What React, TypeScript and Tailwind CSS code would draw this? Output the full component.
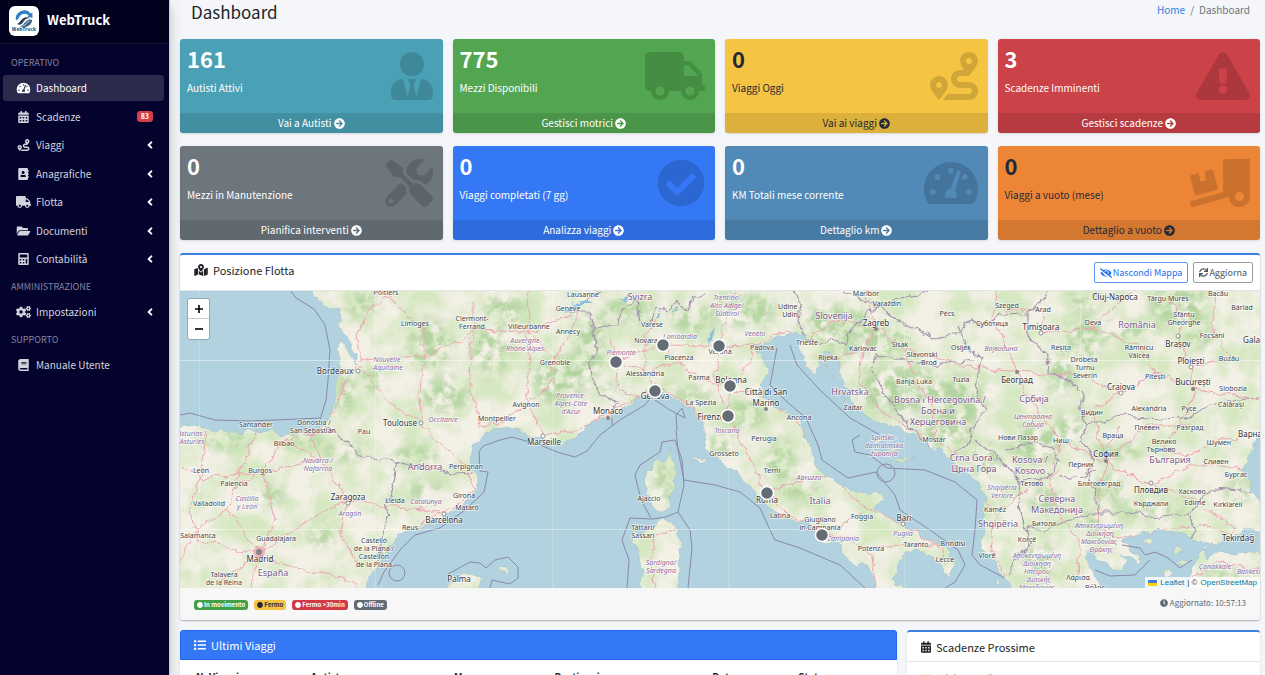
import React, { useState } from 'react';
import type { IconType } from 'react-icons';
import {
  FaAddressBook,
  FaAngleLeft,
  FaArrowCircleRight,
  FaBook,
  FaCalculator,
  FaCalendarAlt,
  FaCheckCircle,
  FaCircle,
  FaClock,
  FaCogs,
  FaExclamationTriangle,
  FaEyeSlash,
  FaFolderOpen,
  FaIdCard,
  FaList,
  FaMapMarkedAlt,
  FaRoute,
  FaSync,
  FaTachometerAlt,
  FaTools,
  FaTruck,
  FaTruckLoading,
  FaUserTie,
} from 'react-icons/fa';

interface NavItem {
  label: string;
  icon: IconType;
  active?: boolean;
  badge?: number;
  tree?: boolean;
}

interface StatCard {
  value: number;
  label: string;
  link: string;
  icon: IconType;
  iconWidth: string;
  color: string;
}

interface MapLabel {
  text: string;
  x: number;
  y: number;
  kind: 'city' | 'big' | 'country' | 'region';
}

const operativo: NavItem[] = [
  { label: 'Dashboard', icon: FaTachometerAlt, active: true },
  { label: 'Scadenze', icon: FaCalendarAlt, badge: 83 },
  { label: 'Viaggi', icon: FaRoute, tree: true },
  { label: 'Anagrafiche', icon: FaAddressBook, tree: true },
  { label: 'Flotta', icon: FaTruck, tree: true },
  { label: 'Documenti', icon: FaFolderOpen, tree: true },
  { label: 'Contabilità', icon: FaCalculator, tree: true },
];

const stats: StatCard[] = [
  { value: 161, label: 'Autisti Attivi', link: 'Vai a Autisti', icon: FaUserTie, iconWidth: 'w-[42px]', color: 'bg-[#4aa0b5] text-white' },
  { value: 775, label: 'Mezzi Disponibili', link: 'Gestisci motrici', icon: FaTruck, iconWidth: 'w-[60px]', color: 'bg-[#53a651] text-white' },
  { value: 0, label: 'Viaggi Oggi', link: 'Vai ai viaggi', icon: FaRoute, iconWidth: 'w-[48px]', color: 'bg-[#f5c443] text-[#1f2937]' },
  { value: 3, label: 'Scadenze Imminenti', link: 'Gestisci scadenze', icon: FaExclamationTriangle, iconWidth: 'w-[54px]', color: 'bg-[#cb4249] text-white' },
  { value: 0, label: 'Mezzi in Manutenzione', link: 'Pianifica interventi', icon: FaTools, iconWidth: 'w-[48px]', color: 'bg-[#6d757d] text-white' },
  { value: 0, label: 'Viaggi completati (7 gg)', link: 'Analizza viaggi', icon: FaCheckCircle, iconWidth: 'w-[48px]', color: 'bg-[#3478f6] text-white' },
  { value: 0, label: 'KM Totali mese corrente', link: 'Dettaglio km', icon: FaTachometerAlt, iconWidth: 'w-[54px]', color: 'bg-[#5189b7] text-white' },
  { value: 0, label: 'Viaggi a vuoto (mese)', link: 'Dettaglio a vuoto', icon: FaTruckLoading, iconWidth: 'w-[60px]', color: 'bg-[#ed8536] text-[#1f2937]' },
];

const legend = [
  { label: 'In movimento', color: 'bg-[#43a047] text-white' },
  { label: 'Fermo', color: 'bg-[#f5c443] text-[#1f2937]' },
  { label: 'Fermo >30min', color: 'bg-[#cf3a45] text-white' },
  { label: 'Offline', color: 'bg-[#636b73] text-white' },
];

const tripColumns = [
  { label: 'N. Viaggio', width: 'w-[16%]' },
  { label: 'Autista', width: 'w-[20%]' },
  { label: 'Mezzo', width: 'w-[14%]' },
  { label: 'Destinazione', width: 'w-[22%]' },
  { label: 'Data', width: 'w-[12%]' },
  { label: 'Stato', width: 'w-[16%]' },
];

const vehicles = [
  [616, 362],
  [663, 345],
  [719, 346],
  [655, 391],
  [730, 386],
  [728, 416],
  [767, 493],
  [822, 535],
];

const labels: MapLabel[] = [
  { text: 'Poitiers', x: 386, y: 295, kind: 'city' },
  { text: 'Limoges', x: 415, y: 326, kind: 'city' },
  { text: 'Bordeaux', x: 335, y: 374, kind: 'big' },
  { text: 'Nouvelle', x: 387, y: 362, kind: 'region' },
  { text: 'Aquitaine', x: 388, y: 370, kind: 'region' },
  { text: 'Toulouse', x: 400, y: 426, kind: 'big' },
  { text: 'Occitanie', x: 443, y: 422, kind: 'region' },
  { text: 'Santander', x: 256, y: 427, kind: 'city' },
  { text: 'Donostia /', x: 314, y: 425, kind: 'city' },
  { text: 'San Sebastián', x: 313, y: 433, kind: 'city' },
  { text: 'Pau', x: 364, y: 434, kind: 'city' },
  { text: 'Bilbao', x: 284, y: 446, kind: 'city' },
  { text: 'Asturias /', x: 192, y: 436, kind: 'region' },
  { text: 'Asturies', x: 192, y: 444, kind: 'region' },
  { text: 'León', x: 201, y: 473, kind: 'city' },
  { text: 'Burgos', x: 260, y: 473, kind: 'city' },
  { text: 'Palencia', x: 234, y: 486, kind: 'city' },
  { text: 'Navarra /', x: 318, y: 463, kind: 'region' },
  { text: 'Nafarroa', x: 318, y: 471, kind: 'region' },
  { text: 'Valladolid', x: 209, y: 506, kind: 'city' },
  { text: 'Castilla', x: 247, y: 501, kind: 'region' },
  { text: 'y León', x: 247, y: 509, kind: 'region' },
  { text: 'Zaragoza', x: 348, y: 500, kind: 'big' },
  { text: 'Aragón', x: 350, y: 516, kind: 'region' },
  { text: 'Lleida', x: 395, y: 503, kind: 'city' },
  { text: 'Catalunya', x: 426, y: 504, kind: 'region' },
  { text: 'Andorra', x: 425, y: 470, kind: 'country' },
  { text: 'Perpignan', x: 466, y: 469, kind: 'city' },
  { text: 'Girona', x: 464, y: 498, kind: 'city' },
  { text: 'Mataró', x: 467, y: 510, kind: 'city' },
  { text: 'Barcelona', x: 444, y: 523, kind: 'big' },
  { text: 'Reus', x: 410, y: 530, kind: 'city' },
  { text: 'Salamanca', x: 198, y: 538, kind: 'city' },
  { text: 'Guadalajara', x: 276, y: 541, kind: 'city' },
  { text: 'Madrid', x: 260, y: 562, kind: 'big' },
  { text: 'España', x: 273, y: 576, kind: 'country' },
  { text: 'Talavera', x: 224, y: 577, kind: 'city' },
  { text: 'de la Reina', x: 224, y: 585, kind: 'city' },
  { text: 'Castelló', x: 374, y: 543, kind: 'city' },
  { text: 'de la Plana /', x: 374, y: 551, kind: 'city' },
  { text: 'Castellón', x: 374, y: 559, kind: 'city' },
  { text: 'de la Plana', x: 374, y: 567, kind: 'city' },
  { text: 'Palma', x: 459, y: 582, kind: 'big' },
  { text: 'Clermont-', x: 472, y: 321, kind: 'city' },
  { text: 'Ferrand', x: 472, y: 329, kind: 'city' },
  { text: 'Villeurbanne', x: 529, y: 329, kind: 'city' },
  { text: 'Lausanne', x: 583, y: 297, kind: 'city' },
  { text: 'Genève', x: 568, y: 311, kind: 'city' },
  { text: 'Annecy', x: 568, y: 334, kind: 'city' },
  { text: 'Auvergne-', x: 526, y: 343, kind: 'region' },
  { text: 'Rhône-Alpes', x: 525, y: 351, kind: 'region' },
  { text: 'Grenoble', x: 555, y: 365, kind: 'city' },
  { text: 'Provence-', x: 571, y: 398, kind: 'region' },
  { text: 'Alpes-Côte', x: 571, y: 406, kind: 'region' },
  { text: "d'Azur", x: 571, y: 414, kind: 'region' },
  { text: 'Avignon', x: 526, y: 407, kind: 'city' },
  { text: 'Montpellier', x: 497, y: 421, kind: 'city' },
  { text: 'Monaco', x: 608, y: 414, kind: 'big' },
  { text: 'Marseille', x: 544, y: 445, kind: 'big' },
  { text: 'Svizra', x: 640, y: 300, kind: 'country' },
  { text: 'Varese', x: 652, y: 327, kind: 'city' },
  { text: 'Novara', x: 646, y: 343, kind: 'city' },
  { text: 'Lombardia', x: 680, y: 339, kind: 'region' },
  { text: 'Piemonte', x: 621, y: 355, kind: 'region' },
  { text: 'Piacenza', x: 679, y: 360, kind: 'city' },
  { text: 'Alessandria', x: 645, y: 376, kind: 'city' },
  { text: 'Parma', x: 699, y: 380, kind: 'city' },
  { text: 'Genova', x: 655, y: 399, kind: 'big' },
  { text: 'La Spezia', x: 701, y: 405, kind: 'city' },
  { text: 'Firenze', x: 711, y: 420, kind: 'big' },
  { text: 'Bologna', x: 731, y: 383, kind: 'big' },
  { text: 'Verona', x: 720, y: 354, kind: 'city' },
  { text: 'Trentino-', x: 727, y: 300, kind: 'region' },
  { text: 'Alto Adige/', x: 727, y: 308, kind: 'region' },
  { text: 'Südtirol', x: 727, y: 316, kind: 'region' },
  { text: 'Udine /', x: 790, y: 309, kind: 'city' },
  { text: 'Udin', x: 790, y: 317, kind: 'city' },
  { text: 'Veneto', x: 755, y: 336, kind: 'region' },
  { text: 'Padova', x: 762, y: 350, kind: 'city' },
  { text: 'Slovenija', x: 834, y: 319, kind: 'country' },
  { text: 'Maribor', x: 866, y: 296, kind: 'city' },
  { text: 'Varaždin', x: 887, y: 306, kind: 'city' },
  { text: 'Zagreb', x: 876, y: 326, kind: 'big' },
  { text: 'Pécs', x: 947, y: 316, kind: 'city' },
  { text: 'Trieste', x: 807, y: 345, kind: 'city' },
  { text: 'Karlovac', x: 863, y: 351, kind: 'city' },
  { text: 'Sisak', x: 900, y: 347, kind: 'city' },
  { text: 'Osijek', x: 961, y: 350, kind: 'city' },
  { text: 'Slavonski', x: 922, y: 357, kind: 'city' },
  { text: 'Brod', x: 929, y: 365, kind: 'city' },
  { text: 'Rijeka', x: 828, y: 360, kind: 'city' },
  { text: 'Banja Luka', x: 914, y: 384, kind: 'city' },
  { text: 'Tuzla', x: 961, y: 382, kind: 'city' },
  { text: 'Città di San', x: 766, y: 395, kind: 'big' },
  { text: 'Marino', x: 766, y: 406, kind: 'big' },
  { text: 'Hrvatska', x: 850, y: 395, kind: 'country' },
  { text: 'Zadar', x: 853, y: 410, kind: 'city' },
  { text: 'Bosna i Hercegovina /', x: 940, y: 403, kind: 'country' },
  { text: 'Босна и', x: 938, y: 414, kind: 'country' },
  { text: 'Херцеговина', x: 938, y: 425, kind: 'country' },
  { text: 'Ancona', x: 799, y: 420, kind: 'city' },
  { text: 'Toscana', x: 727, y: 433, kind: 'region' },
  { text: 'Perugia', x: 764, y: 441, kind: 'city' },
  { text: 'Grosseto', x: 724, y: 456, kind: 'city' },
  { text: 'Terni', x: 772, y: 473, kind: 'city' },
  { text: 'Abruzzo', x: 809, y: 480, kind: 'region' },
  { text: 'Italia', x: 820, y: 504, kind: 'country' },
  { text: 'Roma', x: 767, y: 503, kind: 'big' },
  { text: 'Latina', x: 780, y: 518, kind: 'city' },
  { text: 'Giugliano', x: 820, y: 522, kind: 'city' },
  { text: 'in Campania', x: 820, y: 530, kind: 'city' },
  { text: 'Campania', x: 843, y: 541, kind: 'region' },
  { text: 'Foggia', x: 862, y: 519, kind: 'city' },
  { text: 'Bari', x: 904, y: 521, kind: 'big' },
  { text: 'Puglia', x: 903, y: 536, kind: 'region' },
  { text: 'Potenza', x: 871, y: 551, kind: 'city' },
  { text: 'Taranto', x: 916, y: 547, kind: 'city' },
  { text: 'Brindisi', x: 953, y: 546, kind: 'city' },
  { text: 'Lecce', x: 945, y: 562, kind: 'city' },
  { text: 'Splitsko-', x: 884, y: 440, kind: 'region' },
  { text: 'dalmatinska', x: 884, y: 448, kind: 'region' },
  { text: 'županija', x: 884, y: 456, kind: 'region' },
  { text: 'Mostar', x: 934, y: 442, kind: 'city' },
  { text: 'Ajaccio', x: 649, y: 501, kind: 'city' },
  { text: 'Tàttari/', x: 643, y: 530, kind: 'city' },
  { text: 'Sassari', x: 643, y: 538, kind: 'city' },
  { text: 'Sardigna/', x: 661, y: 565, kind: 'region' },
  { text: 'Sardegna', x: 661, y: 573, kind: 'region' },
  { text: 'Crna Gora /', x: 974, y: 461, kind: 'country' },
  { text: 'Црна Гора', x: 974, y: 472, kind: 'country' },
  { text: 'Szeged', x: 1007, y: 308, kind: 'city' },
  { text: 'Arad', x: 1043, y: 312, kind: 'city' },
  { text: 'Суботица', x: 992, y: 326, kind: 'city' },
  { text: 'Timișoara', x: 1041, y: 330, kind: 'big' },
  { text: 'Војводина', x: 1001, y: 351, kind: 'region' },
  { text: 'Београд', x: 1017, y: 383, kind: 'big' },
  { text: 'Србија', x: 1034, y: 402, kind: 'country' },
  { text: 'Централна', x: 1033, y: 419, kind: 'region' },
  { text: 'Србија', x: 1033, y: 427, kind: 'region' },
  { text: 'Cluj-Napoca', x: 1115, y: 300, kind: 'big' },
  { text: 'Târgu Mureș', x: 1168, y: 301, kind: 'city' },
  { text: 'Bacău', x: 1218, y: 296, kind: 'city' },
  { text: 'Bârlad', x: 1242, y: 310, kind: 'city' },
  { text: 'Deva', x: 1093, y: 325, kind: 'city' },
  { text: 'România', x: 1137, y: 328, kind: 'country' },
  { text: 'Sfântu', x: 1184, y: 317, kind: 'city' },
  { text: 'Gheorghe', x: 1184, y: 325, kind: 'city' },
  { text: 'Focșani', x: 1212, y: 338, kind: 'city' },
  { text: 'Galați', x: 1254, y: 343, kind: 'big' },
  { text: 'Reșița', x: 1061, y: 350, kind: 'city' },
  { text: 'Brașov', x: 1178, y: 347, kind: 'big' },
  { text: 'Râmnicu', x: 1139, y: 350, kind: 'city' },
  { text: 'Vâlcea', x: 1139, y: 358, kind: 'city' },
  { text: 'Drobeta', x: 1084, y: 362, kind: 'city' },
  { text: 'Turnu', x: 1085, y: 370, kind: 'city' },
  { text: 'Severin', x: 1085, y: 378, kind: 'city' },
  { text: 'Ploiești', x: 1191, y: 364, kind: 'big' },
  { text: 'Buzău', x: 1229, y: 361, kind: 'city' },
  { text: 'Pitești', x: 1155, y: 379, kind: 'city' },
  { text: 'București', x: 1193, y: 385, kind: 'big' },
  { text: 'Craiova', x: 1121, y: 390, kind: 'big' },
  { text: 'Slobozia', x: 1233, y: 391, kind: 'city' },
  { text: 'Alexandria', x: 1149, y: 411, kind: 'city' },
  { text: 'Русе', x: 1189, y: 411, kind: 'city' },
  { text: 'Călărași', x: 1231, y: 407, kind: 'city' },
  { text: 'Видин', x: 1092, y: 415, kind: 'city' },
  { text: 'Плевен', x: 1147, y: 430, kind: 'city' },
  { text: 'Разград', x: 1190, y: 430, kind: 'city' },
  { text: 'Варна', x: 1250, y: 437, kind: 'big' },
  { text: 'Нови Пазар', x: 1018, y: 440, kind: 'city' },
  { text: 'Ниш', x: 1061, y: 443, kind: 'city' },
  { text: 'Враца', x: 1113, y: 438, kind: 'city' },
  { text: 'Велико', x: 1164, y: 444, kind: 'city' },
  { text: 'Търново', x: 1161, y: 452, kind: 'city' },
  { text: 'Шумен', x: 1219, y: 445, kind: 'city' },
  { text: 'София', x: 1106, y: 457, kind: 'big' },
  { text: 'България', x: 1170, y: 463, kind: 'country' },
  { text: 'Сливен', x: 1216, y: 464, kind: 'city' },
  { text: 'Бургас', x: 1236, y: 477, kind: 'city' },
  { text: 'Kosova /', x: 1030, y: 463, kind: 'country' },
  { text: 'Kosovo', x: 1030, y: 474, kind: 'country' },
  { text: 'Перник', x: 1081, y: 467, kind: 'city' },
  { text: 'Тетово', x: 1032, y: 486, kind: 'city' },
  { text: 'Благоевград', x: 1099, y: 486, kind: 'city' },
  { text: 'Пловдив', x: 1151, y: 493, kind: 'big' },
  { text: 'Хасково', x: 1192, y: 494, kind: 'city' },
  { text: 'Shqipëria', x: 1002, y: 490, kind: 'region' },
  { text: 'Veriore', x: 1002, y: 498, kind: 'region' },
  { text: 'Северна', x: 1057, y: 502, kind: 'country' },
  { text: 'Македонија', x: 1057, y: 513, kind: 'country' },
  { text: 'Кърджали', x: 1151, y: 506, kind: 'city' },
  { text: 'Edirne', x: 1195, y: 505, kind: 'city' },
  { text: 'Kırklareli', x: 1228, y: 507, kind: 'city' },
  { text: 'Kamëz', x: 995, y: 512, kind: 'city' },
  { text: 'Shqipëria', x: 998, y: 527, kind: 'country' },
  { text: 'Битола', x: 1044, y: 526, kind: 'city' },
  { text: 'Αποκεντρωμένη', x: 1099, y: 528, kind: 'region' },
  { text: 'Διοίκηση', x: 1100, y: 536, kind: 'region' },
  { text: 'Μακεδονίας', x: 1099, y: 544, kind: 'region' },
  { text: 'Θράκης', x: 1101, y: 552, kind: 'region' },
  { text: 'Korçë', x: 1027, y: 542, kind: 'city' },
  { text: 'Tekirdağ', x: 1238, y: 541, kind: 'big' },
  { text: 'Vlorë', x: 987, y: 558, kind: 'city' },
  { text: 'Αποκεντρωμένη', x: 1037, y: 558, kind: 'region' },
  { text: 'Διοίκηση', x: 1037, y: 566, kind: 'region' },
  { text: 'Ηπείρου', x: 1037, y: 574, kind: 'region' },
  { text: '- Δυτικής', x: 1037, y: 582, kind: 'region' },
  { text: 'Μακεδονίας', x: 1037, y: 590, kind: 'region' },
  { text: 'Λάρισα', x: 1078, y: 580, kind: 'city' },
  { text: 'Βόλος', x: 1095, y: 590, kind: 'city' },
  { text: 'Çanakkale', x: 1215, y: 569, kind: 'region' },
  { text: 'Balıkesir', x: 1250, y: 574, kind: 'region' },
];

const labelClass = {
  city: 'fill-[#45454a] text-[7px]',
  big: 'fill-[#333338] text-[8px]',
  country: 'fill-[#7d5a8c] text-[9px]',
  region: 'fill-[#8f6ea0] text-[7px] italic',
};

// sea surfaces, with the islands cut out through the even-odd rule
const seas = [
  // Biscay
  'M160 270 L308 270 L313 291 L318 298 L327 305 L340 311 L342 320 L338 323 L343 333 L350 344 L356 356 L357 365 L352 356 L345 344 L340 342 L339 360 L338 377 L335 397 L332 413 L325 427 L313 433 L290 434 L280 435 L270 430 L257 431 L240 433 L223 431 L207 428 L193 424 L180 427 L160 428 Z',
  // western Mediterranean and Tyrrhenian
  'M355 610 L365 588 L372 573 L380 563 L388 547 L400 538 L398 535 L410 527 L422 526 L443 517 L457 508 L470 498 L477 488 L478 477 L473 470 L472 457 L475 445 L483 434 L503 425 L518 430 L530 438 L546 441 L560 444 L573 440 L582 432 L587 425 L600 420 L608 418 L623 410 L640 397 L657 390 L670 397 L683 403 L697 412 L703 422 L705 436 L707 450 L718 457 L727 467 L737 473 L747 485 L758 495 L765 499 L770 508 L783 517 L800 522 L810 525 L815 534 L824 543 L834 540 L842 544 L845 558 L857 567 L867 563 L872 577 L875 588 L880 610 Z',
  'M670 448 L673 460 L675 477 L672 492 L668 507 L664 513 L655 508 L652 502 L647 493 L650 488 L645 482 L647 472 L657 462 L667 460 Z',
  'M663 518 L675 527 L680 540 L683 548 L678 558 L679 573 L678 610 L640 610 L642 570 L638 545 L632 542 L633 530 L643 533 L657 525 Z',
  'M447 592 L455 578 L473 572 L483 580 L477 592 L470 610 L450 610 Z',
  'M496 567 L507 567 L510 575 L500 572 Z',
  'M692 457 L698 458 L703 456 L702 460 L693 460 Z',
  // Adriatic and Ionian
  'M755 347 L767 342 L780 335 L797 333 L806 338 L800 345 L803 357 L812 374 L818 367 L823 353 L833 355 L840 367 L842 378 L848 392 L852 403 L863 412 L877 422 L900 428 L915 436 L930 445 L950 458 L963 470 L980 485 L985 497 L983 510 L985 527 L982 540 L985 553 L997 567 L1003 578 L1012 588 L1015 610 L910 610 L903 588 L893 580 L897 563 L907 552 L917 550 L933 557 L940 563 L943 573 L950 576 L955 563 L947 550 L930 540 L910 528 L890 517 L873 508 L883 498 L882 492 L857 493 L837 483 L820 470 L810 450 L806 435 L800 420 L786 412 L772 406 L763 396 L762 382 L767 368 L762 355 Z',
  'M826 362 L831 372 L828 370 Z M832 376 L840 390 L836 386 Z M843 396 L852 412 L847 406 Z M868 440 L888 437 L880 442 Z M885 450 L905 447 L896 452 Z M890 459 L914 458 L900 462 Z M996 578 L1002 584 L998 588 Z',
  // Aegean
  'M1122 540 L1140 533 L1160 530 L1180 533 L1193 540 L1213 545 L1200 552 L1195 562 L1190 577 L1193 610 L1110 610 L1095 577 L1087 563 L1088 551 L1098 560 L1105 561 L1112 570 L1123 572 L1127 563 L1120 555 L1130 558 L1137 566 L1140 558 L1128 548 Z',
  'M1144 539 L1149 536 L1153 541 L1149 546 L1144 544 Z M1172 550 L1178 548 L1184 551 L1178 554 Z M1160 570 L1168 567 L1173 574 L1165 577 Z M1176 563 L1183 559 L1188 562 L1182 566 Z',
  // Marmara
  'M1203 548 L1220 542 L1237 537 L1246 531 L1280 527 L1280 556 L1243 552 L1233 555 L1220 550 L1208 558 Z',
  // Black Sea
  'M1280 430 L1256 440 L1252 450 L1247 460 L1243 470 L1249 480 L1253 493 L1260 502 L1280 508 Z',
].join(' ');

const borders = [
  'M327 427 L345 440 L360 456 L372 459 L395 461 L415 465 L432 468 L450 474 L473 473',
  'M398 461 L394 480 L388 500 L386 520 L378 560',
  'M600 291 L585 300 L565 312 L590 312 L594 326 L590 333 L598 350 L588 360 L592 380 L600 395 L617 402 L612 415',
  'M590 326 L615 325 L622 310 L634 300 L640 320 L650 322 L656 306 L668 312 L676 300 L688 310 L692 297 L705 295',
  'M795 291 L800 305 L798 320 L804 338 L818 345 L832 339 L845 344 L852 330 L868 310 L880 308 L905 325 L935 338 L960 332 L968 320 L985 325 L1000 314 L1028 313 L1045 298 L1050 285',
  'M845 291 L865 300 L880 308 L900 297 L930 292',
  'M958 325 L966 345 L975 355 L985 356 L978 372 L976 395 L985 410',
  'M976 360 L955 362 L930 366 L905 360 L875 355 L870 370 L880 385 L895 410 L915 432 L930 445',
  'M1028 313 L1028 335 L1048 355 L1047 372 L1065 378 L1080 390 L1083 400 L1080 410 L1087 425 L1120 416 L1160 419 L1185 420 L1210 405 L1240 400 L1270 395',
  'M985 410 L975 425 L968 445 L950 455',
  'M1087 425 L1080 440 L1095 458 L1088 472 L1095 490 L1097 512 L1085 518 L1060 522 L1045 532 L1025 528 L1018 505 L1020 480 L1000 460 L975 440',
  'M1020 480 L1045 478 L1060 462 L1050 448 L1030 442 L1005 450',
  'M1060 478 L1085 476 L1095 470',
  'M1097 512 L1130 512 L1160 518 L1190 515 L1200 500 L1215 488 L1240 490 L1254 492',
  'M1190 515 L1196 530 L1190 540',
  'M1025 528 L1030 545 L1015 560 L1008 575',
];

const waterBorders = [
  'M291 291 L296 298 L314 309 L325 325 L328 340 L330 350 L328 380 L326 400 L320 420 M180 415 L190 413 L215 420 L250 421 L275 420 L320 418',
  'M378 585 L384 572 L400 550 L415 535 L440 528 L465 510 L484 492 L488 472 L480 471 L479 452 L483 446 L500 440 L512 437 L540 445 L560 453 L575 457 L587 451 L600 435 L620 420 L645 405 L655 392',
  'M676 430 L678 450 L684 480 L715 485 L740 492 L760 508 L770 530 L775 540 L800 548 L840 565 L865 588',
  'M651 518 L641 500 L635 475 L640 465 L660 452 L662 442 L675 440 L682 460 L684 485 L678 512 L666 517 L652 519 L630 518 L622 540 L629 560 L627 588 M678 512 L690 530 L692 548 L688 588',
  'M448 574 L470 562 L480 563 L486 568 L495 560 L508 557 L518 567 L518 578 L510 584 L492 580 L490 588',
  'M777 348 L770 385 L785 400 L806 418 L818 445 L822 460 L848 478 L876 472 L895 495 L900 510 L930 530 L958 550 L965 565 L955 582 L945 588',
  'M790 345 L797 365 L820 390 L850 418 L880 435 M860 435 L852 440 L855 452 L870 455 L887 468 L925 470 L955 482 L977 500 L975 530 L972 555 L980 565 L1005 578',
  'M677 430 L676 415 L682 408 L685 418 M612 418 L612 425 M655 400 L670 410 L685 418',
  'M1122 545 L1140 548 L1145 555 L1155 552 L1168 558 L1180 568 L1192 560 M1095 570 L1110 576 L1135 575 L1150 560',
];

const roads = [
  'M386 296 L370 310 L357 335 L361 360 L345 385 L335 410 L320 432 L284 440 L262 470 L234 488 L228 510 L260 555',
  'M386 296 L424 330 L424 360 L420 390 L421 424 L440 445 L466 466 L475 490 L444 512 L420 524 L395 545 L372 585',
  'M361 366 L385 400 L421 424 M361 360 L424 357 L460 340 L472 330 L529 332 L570 315',
  'M472 330 L472 300 M472 330 L470 380 L480 425 L500 423 L527 405 L530 370 L528 332 L530 291',
  'M527 405 L544 435 L575 430 L608 415 L640 396 L655 385 L683 400 L705 418',
  'M528 332 L555 358 L550 385 L530 400 M555 358 L570 335 L580 310',
  'M284 440 L320 460 L348 500 L395 507 L440 512 M348 500 L300 525 L260 555 L215 585 M348 500 L340 530 L355 560 L370 570',
  'M260 555 L200 540 L190 510 L201 478 L180 465 M260 555 L275 520 L262 470 M260 555 L300 570 L345 578 L360 588 M260 555 L250 588 M201 478 L262 472 L320 460',
  'M228 510 L195 530 L180 560 M320 460 L310 430 M201 478 L205 430 M257 430 L234 488',
  'M616 362 L640 350 L663 345 L719 346 L755 345 L785 330 L807 340 L835 320 L876 325 L905 350 L960 365 L1017 372',
  'M616 362 L645 370 L679 363 L699 378 L730 388 L766 398 L800 425 L825 468 L860 505 L904 524 L940 548 L948 566',
  'M663 345 L679 363 M655 390 L645 370 L645 335 L660 315 M616 362 L610 340 M616 362 L618 390 L640 396 M730 388 L728 416 L745 450 L767 493 L785 512 L822 533 L850 540 L871 555 L875 588',
  'M730 388 L750 360 L755 345 M719 346 L725 320 L735 291 M719 346 L715 380 L728 416 M767 493 L800 480 L830 475 M822 533 L862 515 M871 548 L916 545 L953 545',
  'M876 325 L870 300 M876 325 L863 350 L833 358 M863 350 L860 380 L880 410 L930 440 M905 350 L914 378 L935 410 L934 440 L965 460',
  'M1017 372 L1005 340 L992 318 L995 291 M1017 372 L1035 410 L1061 440 L1085 452 L1106 462 L1140 480 L1151 485 L1195 500 L1237 530',
  'M1061 440 L1050 480 L1057 510 L1080 545 L1078 575 M1106 462 L1099 490 L1098 530 L1120 538 L1160 530 L1195 525 L1235 533',
  'M1041 333 L1093 328 L1115 305 L1130 291 M1093 328 L1139 345 L1155 372 L1193 388 L1230 395 L1260 400 M1193 388 L1191 368 L1178 340 L1184 320 L1168 300',
  'M1191 368 L1229 355 L1212 330 L1215 291 M1041 333 L1043 310 L1007 310 M1017 372 L1060 375 L1085 375 L1121 393 L1155 372 M1121 393 L1092 410 L1106 462',
  'M1193 388 L1189 410 L1164 450 L1190 455 L1219 440 L1250 435 M1151 485 L1190 465 L1216 465 L1243 470 M1106 462 L1147 425 L1190 425',
  'M1120 425 L1106 450 M985 500 L995 515 L990 550 L1005 575 M995 515 L1032 485 L1061 470 M1180 588 L1215 562 L1260 570 M655 540 L650 560 L655 588 M655 535 L675 530',
];

const woods = [
  [362, 305, 16, 12], [345, 395, 9, 22], [372, 380, 12, 14], [430, 345, 22, 26], [445, 395, 24, 18],
  [490, 350, 20, 24], [505, 310, 22, 14], [560, 380, 26, 26], [590, 350, 14, 28], [590, 325, 16, 12],
  [300, 440, 26, 8], [345, 452, 22, 9], [415, 455, 24, 10], [225, 442, 26, 7], [270, 495, 16, 10],
  [425, 490, 18, 10], [320, 535, 14, 12], [630, 310, 26, 12], [690, 318, 22, 14], [745, 310, 32, 16],
  [610, 390, 12, 8], [690, 395, 24, 7], [745, 415, 20, 14], [720, 445, 14, 10], [780, 460, 16, 20],
  [800, 490, 24, 8], [835, 322, 34, 18], [880, 340, 32, 16], [835, 352, 16, 10], [900, 390, 44, 24],
  [960, 400, 26, 26], [945, 432, 28, 14], [985, 460, 18, 16], [1035, 445, 24, 20], [1085, 340, 18, 22],
  [1060, 375, 16, 18], [1130, 330, 34, 8], [1180, 305, 30, 20], [1085, 300, 16, 14], [1200, 335, 14, 14],
  [1070, 430, 16, 16], [1120, 452, 30, 7], [1150, 510, 36, 8], [1110, 490, 18, 14], [1090, 520, 12, 12],
  [1045, 500, 18, 12], [1240, 490, 16, 10], [665, 482, 9, 22], [1040, 560, 16, 18], [1230, 578, 26, 8],
];

const NavLink = ({ item }: { item: NavItem }) => {
  const Icon = item.icon;
  return (
    <a
      href="#"
      className={`flex h-[26px] items-center rounded-[3px] pr-2 pl-3 ${
        item.active ? 'bg-[#2b2a4d] text-white' : 'text-[#d3d4dd]'
      }`}
    >
      <span className="mr-1 flex w-[17px] shrink-0 justify-center">
        <Icon className="h-3 w-[15px]" />
      </span>
      <span className="flex-1 whitespace-nowrap">{item.label}</span>
      {item.badge && (
        <span className="mr-[3px] rounded-[3px] bg-[#d23f4b] px-1 text-[7px] leading-[11px] font-bold text-white">{item.badge}</span>
      )}
      {item.tree && <FaAngleLeft className="size-3 text-white" />}
    </a>
  );
};

const NavHeader = ({ children }: { children: React.ReactNode }) => (
  <h2 className="px-2 text-[9px] leading-[25px] text-[#8483a0]">{children}</h2>
);

const Logo = () => (
  <svg viewBox="0 0 30 30" className="size-[30px] rounded-md bg-white" role="img" aria-label="WebTruck">
    <path d="M7 14.500A8.400 8.400 0 0 1 21.800 7.600l1.500-1 .2 5.400-5.200-1.400 1.500-1A6 6 0 0 0 9.600 12.500z" fill="#2d7fc1" />
    <path d="M8 18c3-1 4-5.500 8-6.500 2-.5 4 0 5 .7-4-.2-5.500 2-7 4.200-1.300 1.900-3.200 3-6 1.600z" fill="#27415e" />
    <path d="M11 20c4 .3 4.500-5.600 9.500-6.500l2.600.2c.2 3-2.600 6.800-6.800 7.300-2 .2-4-.2-5.300-1z" fill="#3a6285" />
    <path d="M14 20c3-.5 3.400-4.200 6.500-5.200" stroke="#fff" strokeWidth="0.7" fill="none" />
    <text x="15" y="25" textAnchor="middle" className="fill-[#1f4468] text-[5px] font-bold">
      WebTruck
    </text>
  </svg>
);

const FleetMap = () => (
  <svg
    viewBox="180 291 1080 297"
    preserveAspectRatio="xMidYMid slice"
    className="block h-[297px] w-full"
    role="img"
    aria-label="Mappa posizione flotta"
  >
    <defs>
      <filter id="green" filterUnits="userSpaceOnUse" x="180" y="291" width="1080" height="297" colorInterpolationFilters="sRGB">
        <feTurbulence type="fractalNoise" baseFrequency="0.035" numOctaves="5" seed="4" />
        <feColorMatrix values="0 0 0 0 0.84  0 0 0 0 0.91  0 0 0 0 0.76  3 0 0 0 -1.1" />
      </filter>
      <filter id="woods" filterUnits="userSpaceOnUse" x="160" y="270" width="1120" height="340" colorInterpolationFilters="sRGB">
        <feGaussianBlur in="SourceGraphic" stdDeviation="6" result="soft" />
        <feTurbulence type="fractalNoise" baseFrequency="0.09" numOctaves="4" seed="9" />
        <feColorMatrix values="0 0 0 0 1  0 0 0 0 1  0 0 0 0 1  0 4 0 0 -1.5" result="holes" />
        <feComposite in="soft" in2="holes" operator="in" />
      </filter>
      <filter id="rough" filterUnits="userSpaceOnUse" x="160" y="270" width="1120" height="340" colorInterpolationFilters="sRGB">
        <feTurbulence type="fractalNoise" baseFrequency="0.09" numOctaves="3" seed="2" result="noise" />
        <feDisplacementMap in="SourceGraphic" in2="noise" scale="9" xChannelSelector="R" yChannelSelector="G" />
      </filter>
    </defs>

    <rect x="180" y="291" width="1080" height="297" fill="#f3f0e6" />
    <rect x="180" y="291" width="1080" height="297" filter="url(#green)" />
    <g filter="url(#woods)" fill="#b3d4a0">
      {woods.map(([cx, cy, rx, ry]) => (
        <ellipse key={`${cx}-${cy}`} cx={cx} cy={cy} rx={rx} ry={ry} />
      ))}
    </g>

    <g filter="url(#rough)" fill="none" strokeLinejoin="round">
      {roads.map((d) => (
        <path key={d} d={d} stroke="#eda3b0" strokeWidth="1" />
      ))}
      {borders.map((d) => (
        <path key={d} d={d} stroke="#a493ae" strokeWidth="1.2" />
      ))}
      <path d={seas} fill="#b1d2de" fillRule="evenodd" stroke="#9fbccb" strokeWidth="0.5" />
      <path d="M565 313 L572 305 L585 300 L592 305 L582 305 L573 309 Z M708 345 L711 330 L714 325 L712 340 Z M656 320 L662 308 L659 320 Z M673 312 L678 305 L677 312 Z M620 300 L630 292 L626 300 Z" fill="#8fbfe0" />
    </g>
    <g fill="none" stroke="#8b88ab" strokeWidth="1" strokeLinejoin="round">
      {waterBorders.map((d) => (
        <path key={d} d={d} />
      ))}
      <circle cx="397" cy="573" r="8" />
      <circle cx="886" cy="473" r="9" />
    </g>

    <g fill="#fff" opacity="0.45">
      <rect x="180" y="360" width="1080" height="1" />
      <rect x="180" y="529" width="1080" height="1" />
    </g>
    <g fill="#fff" opacity="0.2">
      <rect x="199" y="291" width="1" height="297" />
      <rect x="375" y="291" width="1" height="297" />
      <rect x="552" y="291" width="1" height="297" />
      <rect x="728" y="291" width="1" height="297" />
      <rect x="904" y="291" width="1" height="297" />
      <rect x="1080" y="291" width="1" height="297" />
    </g>

    <g className="font-['Noto_Sans',sans-serif]" textAnchor="middle" stroke="#fff" strokeOpacity="0.7" strokeWidth="1.5" paintOrder="stroke">
      {labels.map((l) => (
        <text key={`${l.text}-${l.x}-${l.y}`} x={l.x} y={l.y} className={labelClass[l.kind]}>
          {l.text}
        </text>
      ))}
    </g>

    <g fill="#fff" stroke="#777" strokeWidth="0.8">
      <circle cx="358" cy="371" r="2" />
      <circle cx="421" cy="423" r="2" />
      <circle cx="348" cy="503" r="2" />
      <circle cx="444" cy="514" r="2" />
      <circle cx="543" cy="436" r="2" />
      <circle cx="1041" cy="333" r="2" />
      <circle cx="1178" cy="336" r="2" />
      <circle cx="1191" cy="367" r="2" />
      <circle cx="1121" cy="393" r="2" />
      <circle cx="1151" cy="483" r="2" />
      <circle cx="903" cy="524" r="2" />
    </g>
    <circle cx="259" cy="552" r="6" fill="#eda3b0" opacity="0.7" />
    <g fill="#858585">
      <circle cx="259" cy="552" r="3" />
      <circle cx="608" cy="418" r="2" />
      <circle cx="766" cy="409" r="2" />
      <circle cx="876" cy="329" r="2" />
      <circle cx="1017" cy="372" r="2" />
      <circle cx="1193" cy="389" r="2" />
      <circle cx="1106" cy="461" r="2" />
    </g>

    <g fill="#646c75" stroke="#fff" strokeWidth="1.5">
      {vehicles.map(([x, y]) => (
        <circle key={`${x}-${y}`} cx={x} cy={y} r="6.5" />
      ))}
    </g>
  </svg>
);

const App = () => {
  const [mapVisible, setMapVisible] = useState(true);

  return (
    <div className="flex h-screen overflow-hidden bg-[#f4f6f9] font-['Noto_Sans_CJK_SC','Noto_Sans',sans-serif] text-[10px] leading-[14px] text-[#212529]">
      <aside className="z-10 flex w-[170px] shrink-0 flex-col border-r border-[#c9c9d2] bg-[#04032d] shadow-[0_6px_12px_rgba(0,0,0,0.22)]">
        <a href="#" className="flex h-11 shrink-0 items-start border-b border-[#16153a] bg-[#02011d] pt-[6px] pl-[9px] text-white">
          <Logo />
          <span className="ml-2 text-[13px] leading-7 font-bold">WebTruck</span>
        </a>
        <nav className="pt-[6px] pr-[5px] pl-[3px]">
          <NavHeader>OPERATIVO</NavHeader>
          <div className="flex h-[197px] flex-col justify-between">
            {operativo.map((item) => (
              <NavLink key={item.label} item={item} />
            ))}
          </div>
          <div className="pt-[2px]">
            <NavHeader>AMMINISTRAZIONE</NavHeader>
            <NavLink item={{ label: 'Impostazioni', icon: FaCogs, tree: true }} />
          </div>
          <div className="pt-[2px]">
            <NavHeader>SUPPORTO</NavHeader>
            <NavLink item={{ label: 'Manuale Utente', icon: FaBook }} />
          </div>
        </nav>
      </aside>

      <main className="min-w-0 flex-1 pr-[5px] pl-[10px]">
        <header className="flex h-[39px] items-start justify-between pr-[10px] pl-[11px]">
          <h1 className="text-[17px] leading-6">Dashboard</h1>
          <nav aria-label="breadcrumb" className="flex gap-[5px] leading-5 text-[#6c757d]">
            <a href="#" className="text-[#2f7de0]">Home</a>
            <span>/</span>
            <span>Dashboard</span>
          </nav>
        </header>

        <section className="grid grid-cols-4 gap-x-[10px] gap-y-[13px]">
          {stats.map((s) => {
            const Icon = s.icon;
            return (
              <div key={s.label} className={`relative flex h-[94px] flex-col overflow-hidden rounded-[3px] shadow-sm ${s.color}`}>
                <div className="flex-1 px-[7px] pt-[5px]">
                  <h3 className="text-[22px] leading-7 font-bold">{s.value}</h3>
                  <p className="pt-[9px]">{s.label}</p>
                </div>
                <Icon className={`absolute top-[13px] right-[10px] h-12 text-black/15 ${s.iconWidth}`} />
                <a href="#" className="flex h-5 items-center justify-center gap-[2px] bg-black/10">
                  {s.link}
                  <FaArrowCircleRight className="size-[11px]" />
                </a>
              </div>
            );
          })}
        </section>

        <section className="mt-[13px] rounded-[3px] border-t-2 border-[#3b82e0] bg-white shadow-[0_1px_2px_rgba(0,0,0,0.3)]">
          <div className="flex h-9 items-center justify-between border-b border-[#e3e5e8] pr-[7px] pl-[14px]">
            <h2 className="flex items-center gap-[5px] pb-[6px] text-[11px]">
              <FaMapMarkedAlt className="h-3 w-[14px]" />
              Posizione Flotta
            </h2>
            <div className="flex gap-[5px] text-[9px]">
              <button
                type="button"
                onClick={() => setMapVisible(!mapVisible)}
                className="flex h-[21px] items-center gap-px rounded-[2px] border border-[#5a97f8] px-[5px] text-[#1a6cf5]"
              >
                <FaEyeSlash className="h-[10px] w-3" />
                {mapVisible ? 'Nascondi Mappa' : 'Mostra Mappa'}
              </button>
              <button type="button" className="flex h-[21px] items-center gap-px rounded-[2px] border border-[#9a9fa5] px-[5px] text-[#4d555c]">
                <FaSync className="size-[9px]" />
                Aggiorna
              </button>
            </div>
          </div>

          {mapVisible && (
            <div className="relative">
              <FleetMap />
              <div className="absolute top-[7px] left-[7px] flex flex-col rounded-[3px] border border-[#8fa9b5] bg-white text-black">
                <button type="button" aria-label="Zoom in" className="flex h-5 w-[21px] items-center justify-center border-b border-[#ccc]">
                  <svg viewBox="0 0 10 10" className="size-[10px]" stroke="currentColor" strokeWidth="1.6">
                    <path d="M1 5h8M5 1v8" />
                  </svg>
                </button>
                <button type="button" aria-label="Zoom out" className="flex h-5 w-[21px] items-center justify-center">
                  <svg viewBox="0 0 10 10" className="size-[10px]" stroke="currentColor" strokeWidth="1.6">
                    <path d="M1 5h8" />
                  </svg>
                </button>
              </div>
              <div className="absolute right-0 bottom-0 flex h-[11px] items-center gap-[3px] bg-white/80 px-[3px] font-['Liberation_Sans',sans-serif] text-[8px] text-[#333]">
                <svg viewBox="0 0 12 8" className="h-[6px] w-[9px]">
                  <path fill="#4C7BE1" d="M0 0h12v4H0z" />
                  <path fill="#FFD500" d="M0 4h12v4H0z" />
                </svg>
                <a href="#" className="text-[#0078a8]">Leaflet</a>
                <span>| ©</span>
                <a href="#" className="text-[#0078a8]">OpenStreetMap</a>
              </div>
            </div>
          )}

          <div className="flex h-8 items-center justify-between rounded-b-[3px] bg-[#f7f7f7] px-[14px]">
            <div className="flex gap-[6px] pt-[2px]">
              {legend.map((l) => (
                <span key={l.label} className={`flex h-[10px] items-center gap-px rounded-[3px] px-[3px] text-[6px] font-bold ${l.color}`}>
                  <FaCircle className="size-[6px]" />
                  {l.label}
                </span>
              ))}
            </div>
            <span className="flex items-center gap-[2px] pb-[3px] text-[8px] text-[#5d666e]">
              <FaClock className="size-2" />
              Aggiornato: 10:57:13
            </span>
          </div>
        </section>

        <div className="mt-[10px] flex gap-[10px]">
          <section className="min-w-0 flex-[717] rounded-[3px] bg-white shadow-sm">
            <h2 className="flex h-[30px] items-center gap-[5px] rounded-t-[3px] border border-[#2468ee] bg-[#3478f6] px-[13px] text-[11px] text-white">
              <FaList className="size-3" />
              Ultimi Viaggi
            </h2>
            <table className="w-full table-fixed text-left">
              <thead>
                <tr>
                  {tripColumns.map((c) => (
                    <th key={c.label} className={`pt-[10px] pl-4 font-bold ${c.width}`}>
                      {c.label}
                    </th>
                  ))}
                </tr>
              </thead>
            </table>
          </section>

          <section className="min-w-0 flex-[353] rounded-[3px] border-t-2 border-[#3b82e0] bg-white shadow-sm">
            <h2 className="flex h-[30px] items-center gap-[5px] border-b border-[#e3e5e8] px-[14px] text-[11px]">
              <FaCalendarAlt className="h-3 w-[10px]" />
              Scadenze Prossime
            </h2>
            <p className="flex items-center gap-[7px] px-[14px] pt-[10px]">
              <FaIdCard className="h-[10px] w-[11px] text-[#f5b921]" />
              <strong className="font-bold">Visita Medica</strong>
              <span className="text-[#6c757d]">- CIR CHISTIAN MIHAI VITARO</span>
            </p>
          </section>
        </div>
      </main>
    </div>
  );
};

export default App;
